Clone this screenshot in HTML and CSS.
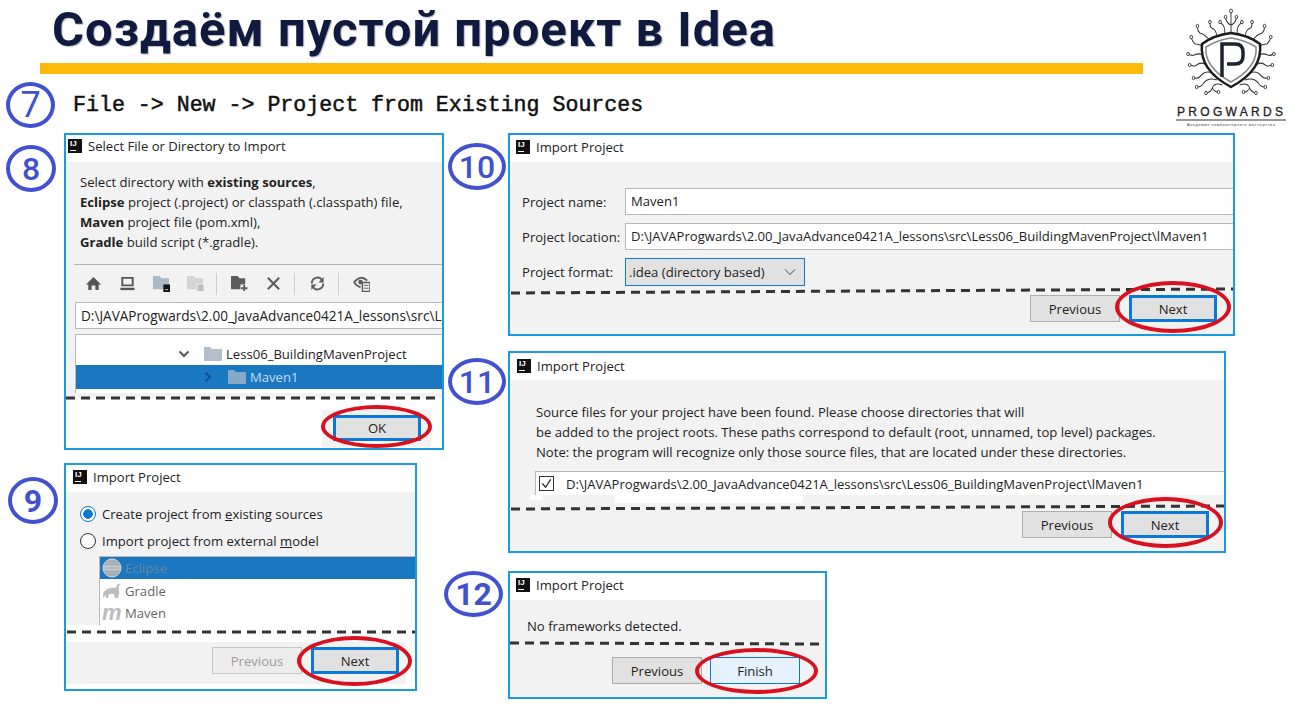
FILE: index.html
```html
<!DOCTYPE html>
<html lang="ru">
<head>
    <meta charset="UTF-8">
    <title>Создаём пустой проект в Idea</title>
    <link rel="stylesheet" href="styles.css">
</head>
<body>
<div class="slide">
    <h1 class="title">Создаём пустой проект в Idea</h1>
    <div class="bar"></div>
    <div class="step">
        <span class="num num7">7</span>
        <span class="cmd">File -&gt; New -&gt; Project from Existing Sources</span>
    </div>

    <!-- logo -->
    <svg class="logo" viewBox="0 0 140 135" width="140" height="135">
        <g class="twigs" transform="translate(71 0) scale(.78 1) translate(-71 0)">
            <path d="M71 33V12M71 25Q66 24 64 18M71 25Q76 24 78 18M63 34Q64 26 58 23M79 34Q78 26 84 23"/>
            <g id="half">
                <path d="M53 37Q52 29 46 28Q44 27 44 23M45 42Q38 34 31 33Q28 31 28 27M40 49Q32 44 25 44Q22 42 20 38M40 57Q32 52 24 55Q20 56 17 54M44 68Q34 60 27 65Q24 67 19 65M47 73Q38 70 32 76Q29 79 24 78M53 80Q42 77 36 83Q33 87 28 87M60 85Q50 82 47 88Q45 92 40 93M47 88Q50 92 54 92"/>
                <circle cx="44" cy="22" r="1.700"/><circle cx="28" cy="26" r="1.700"/><circle cx="20" cy="37" r="1.700"/>
                <circle cx="16" cy="54" r="1.700"/><circle cx="18" cy="65" r="1.700"/><circle cx="23" cy="78" r="1.700"/>
                <circle cx="27" cy="87" r="1.700"/><circle cx="39" cy="93" r="1.700"/><circle cx="55" cy="92" r="1.700"/>
            </g>
            <use href="#half" transform="matrix(-1 0 0 1 142 0)"/>
            <circle cx="71" cy="11" r="1.900"/><circle cx="64" cy="17" r="1.700"/><circle cx="78" cy="17" r="1.700"/>
            <circle cx="57" cy="22" r="1.700"/><circle cx="85" cy="22" r="1.700"/>
        </g>
        <path class="shield" d="M71 33Q88 35 100 44Q103 70 71 87Q39 70 42 44Q54 35 71 33Z"/>
        <path class="shield-in" d="M71 38Q85 40 96 47Q98 67 71 82Q44 67 46 47Q57 40 71 38Z"/>
        <path class="pee" d="M62 77V44H75Q83 44 83 52V56Q83 64 75 64H67"/>
        <text class="logo-name" x="17" y="116" textLength="106">PROGWARDS</text>
        <line class="logo-line" x1="16" y1="120" x2="126" y2="120"/>
        <text class="logo-sub" x="27" y="125.5" textLength="88">Академия компьютерного мастерства</text>
    </svg>

    <span class="num num8">8</span>
    <span class="num num9">9</span>
    <span class="num num10">10</span>
    <span class="num num11">11</span>
    <span class="num num12">12</span>

    <!-- 8 -->
    <div class="win win8">
        <div class="win-title"><span class="ij">IJ</span>Select File or Directory to Import</div>
        <div class="win-body">
            <div class="hint">
                <p>Select directory with <b>existing sources</b>,</p>
                <p><b>Eclipse</b> project (.project) or classpath (.classpath) file,</p>
                <p><b>Maven</b> project file (pom.xml),</p>
                <p><b>Gradle</b> build script (*.gradle).</p>
            </div>
            <div class="tools">
                <svg class="ico" viewBox="0 0 18 18"><path fill="#555" d="M9 2L1 10H3.500V16H7V11H11V16H14.500V10H17Z"/></svg>
                <svg class="ico" viewBox="0 0 18 18"><path fill="none" stroke="#555" stroke-width="2" d="M3.500 3H14.500V11H3.500Z"/><path fill="#555" d="M1.500 13.500H16.500V16H1.500Z"/></svg>
                <svg class="ico" viewBox="0 0 18 18"><path fill="#a9bac6" d="M0 1H7L9 3.500H17V15H0Z"/><path fill="#111" d="M11 10H18V18H11Z"/><path fill="#ddd" d="M13 15H16V16H13Z"/></svg>
                <svg class="ico" viewBox="0 0 18 18"><path fill="#d4d4d4" d="M0 1H7L9 3.500H17V15H0Z"/><path fill="#bdbdbd" stroke="#f2f2f2" d="M10.500 9.500H18V17.500H10.500Z"/></svg>
                <i class="sep"></i>
                <svg class="ico" viewBox="0 0 18 18"><path fill="#5d5d5d" d="M0 1H7L9 3.500H15V10H10V15H0Z"/><path fill="none" stroke="#5d5d5d" stroke-width="2" d="M14 10.500V17M10.500 14H17.500"/></svg>
                <svg class="ico" viewBox="0 0 18 18"><path fill="none" stroke="#5d5d5d" stroke-width="2.200" d="M3 3L15 15M15 3L3 15"/></svg>
                <i class="sep"></i>
                <svg class="ico" viewBox="0 0 18 18"><path fill="none" stroke="#5d5d5d" stroke-width="2" d="M3 9A6 6 0 0 1 14 5.500M15 9A6 6 0 0 1 4 12.500"/><path fill="#5d5d5d" d="M15.500 2V8H10ZM2.500 16V10H8Z"/></svg>
                <i class="sep"></i>
                <svg class="ico" viewBox="0 0 18 18"><path fill="none" stroke="#5d5d5d" stroke-width="2" d="M1 8Q8 -1 15 6M1 8Q4 12 8 13"/><circle cx="8" cy="7.500" r="2.500" fill="#5d5d5d"/><path fill="#f2f2f2" stroke="#5d5d5d" stroke-width="1.500" d="M10 8H18V17.500H10Z"/><path stroke="#5d5d5d" d="M11.500 11H16.500M11.500 14H16.500"/></svg>
            </div>
            <div class="path-input">D:\JAVAProgwards\2.00_JavaAdvance0421A_lessons\src\Le</div>
            <div class="tree">
                <div class="tree-row">
                    <svg class="chev" viewBox="0 0 12 12"><path d="M1.500 3.500L6 8L10.500 3.500"/></svg>
                    <svg class="folder" viewBox="0 0 18 14"><path fill="#b4bfc9" d="M0 0H6L8 2H18V14H0Z"/></svg>
                    Less06_BuildingMavenProject
                </div>
                <div class="tree-row sel">
                    <svg class="chev" viewBox="0 0 12 12"><path d="M3.500 1.500L8 6L3.500 10.500"/></svg>
                    <svg class="folder" viewBox="0 0 18 14"><path fill="#86a9c8" d="M0 0H6L8 2H18V14H0Z"/></svg>
                    Maven1
                </div>
            </div>
        </div>
        <div class="foot-white">
            <div class="ok-wrap"><button class="btn primary">OK</button></div>
        </div>
    </div>

    <!-- 9 -->
    <div class="win win9">
        <div class="win-title"><span class="ij">IJ</span>Import Project</div>
        <div class="win-body">
            <label class="radio"><i class="dot on"></i><span>Create project from <u>e</u>xisting sources</span></label>
            <label class="radio"><i class="dot"></i><span>Import project from external <u>m</u>odel</span></label>
            <div class="models">
                <div class="model sel">
                    <svg class="model-ico" viewBox="0 0 20 20"><circle cx="10" cy="10" r="9" fill="#a9b0b8" stroke="#d5d5d5"/><path stroke="#c9ced3" stroke-width="1.500" d="M1 8.500H19M1 11.500H19"/></svg>
                    Eclipse
                </div>
                <div class="model">
                    <svg class="model-ico" viewBox="0 0 20 20"><path fill="#bcbcbc" d="M1 17Q0 9 8 7Q12 6 14 7Q15 2 19 3Q16 4 17 8Q18 12 16 17H13L12 13H7L6 17H4L4 14Z"/></svg>
                    Gradle
                </div>
                <div class="model">
                    <span class="model-m">m</span>
                    Maven
                </div>
            </div>
        </div>
        <div class="foot-strip"></div>
        <div class="foot-gray">
            <button class="btn off">Previous</button>
            <button class="btn primary">Next</button>
        </div>
    </div>

    <!-- 10 -->
    <div class="win win10">
        <div class="win-title"><span class="ij">IJ</span>Import Project</div>
        <div class="win-body">
            <div class="form">
                <span>Project name:</span>
                <div class="field">Maven1</div>
                <span>Project location:</span>
                <div class="field">D:\JAVAProgwards\2.00_JavaAdvance0421A_lessons\src\Less06_BuildingMavenProject\lMaven1</div>
                <span>Project format:</span>
                <div class="combo">.idea (directory based)
                    <svg class="combo-arrow" viewBox="0 0 12 12"><path d="M1 3.500L6 8.500L11 3.500"/></svg>
                </div>
            </div>
            <div class="btn-row">
                <button class="btn">Previous</button>
                <button class="btn primary">Next</button>
            </div>
        </div>
    </div>

    <!-- 11 -->
    <div class="win win11">
        <div class="win-title"><span class="ij">IJ</span>Import Project</div>
        <div class="win-body">
            <div class="hint hint11">
                <p>Source files for your project have been found. Please choose directories that will</p>
                <p>be added to the project roots. These paths correspond to default (root, unnamed, top level) packages.</p>
                <p>Note: the program will recognize only those source files, that are located under these directories.</p>
            </div>
            <div class="dir-row">
                <span class="check"><svg viewBox="0 0 14 14"><path d="M2.500 7L6 11L11.500 2.500"/></svg></span>
                D:\JAVAProgwards\2.00_JavaAdvance0421A_lessons\src\Less06_BuildingMavenProject\lMaven1
            </div>
            <div class="patches"><i class="patch-a"></i><i class="patch-b"></i></div>
            <div class="btn-row">
                <button class="btn">Previous</button>
                <button class="btn primary">Next</button>
            </div>
        </div>
    </div>

    <!-- 12 -->
    <div class="win win12">
        <div class="win-title"><span class="ij">IJ</span>Import Project</div>
        <div class="win-body">
            <p class="none">No frameworks detected.</p>
            <div class="btn-row">
                <button class="btn">Previous</button>
                <button class="btn hot">Finish</button>
            </div>
        </div>
    </div>

    <!-- dashed cuts and red rings lie over the windows -->
    <svg class="cuts" viewBox="0 0 1300 715" width="1300" height="715">
        <path d="M66 398H441"/>
        <path d="M67 632H415"/>
        <path d="M511 293L1233 289"/>
        <path d="M511 509L1224 506"/>
        <path d="M510 643L825 644"/>
    </svg>
    <i class="ring ring8"></i>
    <i class="ring ring9"></i>
    <i class="ring ring10"></i>
    <i class="ring ring11"></i>
    <i class="ring ring12"></i>
</div>
</body>
</html>
```

FILE: styles.css
```css
@charset "UTF-8";
*{box-sizing:border-box}
body,h1,p{margin:0;padding:0}
body{background:#fff;font:13.1px/20px "Open Sans",sans-serif;color:#222}

.slide{
    width:1300px;
    height:715px;
    position:relative;
    overflow:hidden;
}
.title{
    height:63px;
    padding-left:52px;
    font:700 49px/59px Roboto,sans-serif;
    letter-spacing:1px;
    color:#101a3e;
    text-shadow:1px 1px 1px rgba(16,26,62,.3);
    white-space:nowrap;
}
.bar{
    width:1103px;
    height:11px;
    margin-left:40px;
    background:#fbb90a;
}
.step{
    display:flex;
    align-items:center;
    height:46px;
    margin-top:8px;
    padding-left:73px;
}
.cmd{
    font:400 21.6px/30px "Liberation Mono",monospace;
    -webkit-text-stroke:.5px #111;
    color:#111;
    white-space:pre;
}

/* number circles */
.num{
    position:absolute;
    display:flex;
    align-items:center;
    justify-content:center;
    border:4px solid #4151cf;
    border-radius:50%;
    font:500 32px/1 Roboto,sans-serif;
    color:#4151cf;
}
.num7{left:6px;top:82px;width:49px;height:46px;font-weight:400;font-size:36px}
.num8{left:6px;top:145px;width:50px;height:47px}
.num9{left:8px;top:477px;width:50px;height:47px;font-weight:700}
.num10{left:448px;top:143px;width:58px;height:47px}
.num11{left:448px;top:358px;width:58px;height:47px}
.num12{left:444px;top:571px;width:59px;height:46px;font-weight:700}

/* logo */
.logo{position:absolute;left:1160px;top:0}
.twigs path{fill:none;stroke:#333;stroke-width:1.200}
.twigs circle{fill:#fff;stroke:#333;stroke-width:1}
.shield{fill:#fff;stroke:#1c1c1c;stroke-width:2.500}
.shield-in{fill:none;stroke:#888;stroke-width:1.500}
.pee{fill:none;stroke:#1c2230;stroke-width:3.500}
.logo-name{font:400 12px "Liberation Sans",sans-serif;fill:#222;stroke:#222;stroke-width:.3}
.logo-line{stroke:#333;stroke-width:1}
.logo-sub{font:400 4px "Liberation Sans",sans-serif;fill:#444}

/* windows */
.win{
    position:absolute;
    display:flex;
    flex-direction:column;
    border:2px solid #1a9ae0;
    background:#fff;
    overflow:hidden;
}
.win8{left:64px;top:133px;width:380px;height:317px}
.win9{left:64px;top:463px;width:353px;height:228px}
.win10{left:508px;top:133px;width:727px;height:203px}
.win11{left:508px;top:351px;width:718px;height:202px}
.win12{left:508px;top:571px;width:319px;height:128px}

.win-title{
    flex:none;
    display:flex;
    align-items:center;
    height:27px;
    padding:0 0 4px 6px;
    background:#fff;
    white-space:nowrap;
}
.win8 .win-title{padding:0 0 6px 2px}
.win9 .win-title,.win11 .win-title{padding-left:7px}
.win11 .win-title{padding-bottom:2px}
.ij{
    flex:none;
    width:14px;
    height:14px;
    margin-right:6px;
    padding-left:2px;
    background:linear-gradient(#fff,#fff) 2px 11px/6px 1px no-repeat #111;
    color:#fff;
    font:700 8px/9px "Liberation Sans",sans-serif;
}
.win-body{
    flex:1;
    min-height:0;
    display:flex;
    flex-direction:column;
    background:#f2f2f2;
    white-space:nowrap;
}

/* buttons */
.btn{
    flex:none;
    width:90px;
    height:27px;
    border:1px solid #adadad;
    background:#e1e1e1;
    font:13.1px "Open Sans",sans-serif;
    color:#222;
    padding:0;
}
.btn.primary{width:88px;border:3px solid #0a78d7}
.btn.off{border-color:#c6c6c6;color:#9a9a9a;background:#ececec}
.btn.hot{border-color:#0a78d7;background:#e5f1fb}
.btn-row{
    display:flex;
    justify-content:flex-end;
    gap:9px;
    margin-top:auto;
    padding:0 16px 12px 0;
}
.win11 .btn-row{padding:0 15px 13px 0}
.win12 .btn-row{gap:8px;padding:0 25px 13px 0}

/* 8 */
.win8 .win-body{flex:none;height:236px}
.hint{padding:10px 0 0 14px}
.tools{
    flex:none;
    display:flex;
    align-items:center;
    height:38px;
    margin:12px 0 0 8px;
    padding-left:11px;
    border-top:1px solid #b5b5b5;
}
.ico{flex:none;width:17px;height:17px;margin-right:17px}
.sep{flex:none;width:1px;height:22px;margin:0 14px 0 -5px;background:#cdcdcd}
.path-input{
    flex:none;
    height:27px;
    margin-left:9px;
    padding-left:5px;
    border:1px solid #b8b8b8;
    border-right:0;
    background:#fff;
    font-size:13.6px;
    line-height:25px;
    overflow:hidden;
}
.tree{
    flex:none;
    height:59px;
    margin:5px 0 0 9px;
    padding-top:7px;
    border:solid #b8b8b8;
    border-width:1px 0 0 1px;
    background:#fff;
    overflow:hidden;
}
.tree-row{
    display:flex;
    align-items:center;
    height:23px;
    padding-left:102px;
}
.tree-row.sel{
    height:24px;
    padding-left:126px;
    background:#1a78c2;
    color:#c5dcee;
}
.chev{width:12px;height:12px;margin-right:14px;fill:none;stroke:#555;stroke-width:2}
.sel .chev{stroke:#0f4f86}
.folder{width:18px;height:14px;margin-right:4px}
.foot-white{
    flex:1;
    display:flex;
    justify-content:flex-end;
    align-items:flex-end;
    padding:0 11px 1px 0;
    background:#fff;
}
.ok-wrap{padding:5px 10px 6px 11px;background:#f2f2f2;display:flex}
.ok-wrap .btn{height:26px}

/* 9 */
.win9 .win-body{flex:none;height:133px;padding:8px 0 0 14px}
.radio{flex:none;display:flex;align-items:center;height:27px}
.dot{
    flex:none;
    width:16px;
    height:16px;
    margin-right:6px;
    border:1px solid #333;
    border-radius:50%;
    background:#fff;
}
.dot.on{border-color:#0a78d7;background:radial-gradient(circle,#0a78d7 0 4.500px,#fff 5px)}
.models{
    margin:2px 0 0 19px;
    flex:1;
    border:solid #b8b8b8;
    border-width:1px 0 0 1px;
    background:#fff;
    color:#666;
}
.model{
    display:flex;
    align-items:center;
    height:22px;
    padding-left:2px;
}
.model.sel{margin-bottom:1px;background:#1a78c2;color:#6d8296}
.model-ico{width:20px;height:20px;margin-right:3px}
.model-m{
    width:20px;
    margin-right:3px;
    font:italic 700 22px/18px "Liberation Sans",sans-serif;
    color:#bcbcbc;
}
.foot-strip{flex:none;height:17px;background:#fff}
.foot-gray{
    flex:none;
    height:42px;
    margin:0 9px 0 0;
    padding:5px 7px 0 0;
    display:flex;
    align-items:flex-start;
    justify-content:flex-end;
    gap:9px;
    background:#f2f2f2;
}

/* 10 */
.form{
    display:grid;
    grid-template-columns:103px 1fr;
    row-gap:8px;
    align-items:center;
    padding:26px 0 0 12px;
}
.field{
    height:27px;
    padding-left:5px;
    border:1px solid #b8b8b8;
    border-right:0;
    background:#fff;
    line-height:25px;
}
.combo{
    position:relative;
    width:180px;
    height:28px;
    padding-left:3px;
    border:1px solid #0a78d7;
    background:#e1e1e1;
    line-height:26px;
}
.combo-arrow{
    position:absolute;
    right:8px;
    top:7px;
    width:12px;
    height:12px;
    fill:none;
    stroke:#444;
    stroke-width:1;
}

/* 11 */
.hint11{padding:22px 0 0 26px}
.dir-row{
    flex:none;
    display:flex;
    align-items:center;
    height:24px;
    margin:9px 0 0 25px;
    border:solid #b8b8b8;
    border-width:1px 0 0 1px;
    background:#fff;
}
.check{
    width:15px;
    height:15px;
    margin:0 12px 0 3px;
    border:1px solid #333;
    background:#fff;
}
.check svg{display:block;fill:none;stroke:#222;stroke-width:1.300}
.patches{height:0;position:relative}
.patch-a,.patch-b{position:absolute;top:0;background:#fff}
.patch-a{left:20px;width:13px;height:5px}
.patch-b{left:105px;width:188px;height:8px}

/* 12 */
.none{padding:16px 0 0 17px}

/* cuts + rings */
.cuts{position:absolute;left:0;top:0;pointer-events:none}
.cuts path{fill:none;stroke:#333;stroke-width:3;stroke-dasharray:9 6}
.ring{
    position:absolute;
    border:4px solid #d9111f;
    border-radius:50%;
}
.ring8{left:321px;top:405px;width:111px;height:43px}
.ring9{left:297px;top:636px;width:115px;height:50px}
.ring10{left:1115px;top:281px;width:116px;height:52px}
.ring11{left:1108px;top:497px;width:115px;height:51px}
.ring12{left:695px;top:648px;width:123px;height:46px}
```
